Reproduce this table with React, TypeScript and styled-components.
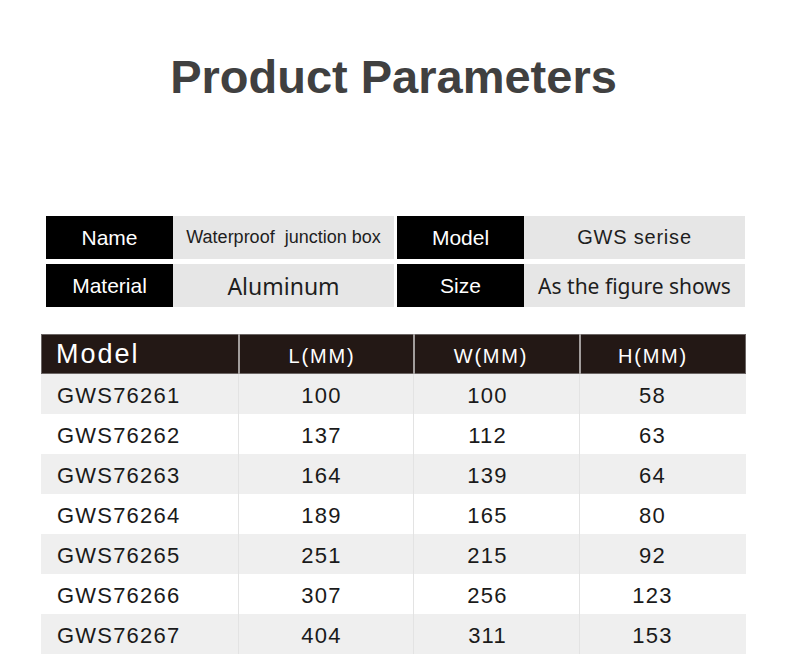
import React from 'react';
import styled, {createGlobalStyle} from "styled-components";

interface IInfoPair {
    label: string,
    value: string,
    valueFont: 'arial' | 'narrow' | 'round',
    valueSize: number
}

interface ISizeRow {
    model: string,
    l: number,
    w: number,
    h: number
}

const infoRows: IInfoPair[][] = [[
    {label: 'Name', value: 'Waterproof  junction box', valueFont: 'narrow', valueSize: 18},
    {label: 'Model', value: 'GWS serise', valueFont: 'arial', valueSize: 20},
], [
    {label: 'Material', value: 'Aluminum', valueFont: 'round', valueSize: 23},
    {label: 'Size', value: 'As the figure shows', valueFont: 'round', valueSize: 21},
]];

const sizeRows: ISizeRow[] = [
    {model: 'GWS76261', l: 100, w: 100, h: 58},
    {model: 'GWS76262', l: 137, w: 112, h: 63},
    {model: 'GWS76263', l: 164, w: 139, h: 64},
    {model: 'GWS76264', l: 189, w: 165, h: 80},
    {model: 'GWS76265', l: 251, w: 215, h: 92},
    {model: 'GWS76266', l: 307, w: 256, h: 123},
    {model: 'GWS76267', l: 404, w: 311, h: 153},
];

// numbers sit a bit left of the column centre in the original
const columnShift = [0, 9, 18, 21];

const fontStacks = {
    arial: `"Liberation Sans", Arial, sans-serif`,
    narrow: `"Liberation Sans Narrow", "Liberation Sans", Arial, sans-serif`,
    round: `"Noto Sans", "Open Sans", sans-serif`,
};

function App() {
    return (
        <Page>
            <GlobalStyle/>
            <Title>Product Parameters</Title>

            <InfoTable>
                {infoRows.map((row, rowIndex) => (
                    <InfoRow key={'info' + rowIndex}>
                        {row.map(({label, value, valueFont, valueSize}) => (
                            <InfoPair key={label}>
                                <InfoLabel>{label}</InfoLabel>
                                <InfoValue $font={valueFont} $size={valueSize}>{value}</InfoValue>
                            </InfoPair>
                        ))}
                    </InfoRow>
                ))}
            </InfoTable>

            <SizeTable>
                <HeaderRow>
                    <HeaderCell $first>Model</HeaderCell>
                    <HeaderCell $shift={columnShift[1]}>L(MM)</HeaderCell>
                    <HeaderCell $shift={columnShift[2] - 6}>W(MM)</HeaderCell>
                    <HeaderCell $shift={columnShift[3]}>H(MM)</HeaderCell>
                </HeaderRow>
                {sizeRows.map((row, index) => (
                    <BodyRow key={row.model} $shaded={index % 2 === 0}>
                        <BodyCell $first>{row.model}</BodyCell>
                        <BodyCell $shift={columnShift[1]}>{row.l}</BodyCell>
                        <BodyCell $shift={columnShift[2]}>{row.w}</BodyCell>
                        <BodyCell $shift={columnShift[3]}>{row.h}</BodyCell>
                    </BodyRow>
                ))}
            </SizeTable>
        </Page>
    );
}

const GlobalStyle = createGlobalStyle`
  body {
    margin: 0;
    background: #ffffff;
    font-family: "Liberation Sans", Arial, sans-serif;
  }
`;

const Page = styled.div`
  width: 790px;
  height: 667px;
  overflow: hidden;
  display: flex;
  flex-direction: column;
  background: #ffffff;
`;

const Title = styled.h1`
  margin: 53px 0 0;
  font-size: 47px;
  line-height: 47px;
  font-weight: bold;
  text-align: center;
  color: #404040;
  padding-right: 3px;
`;

const InfoTable = styled.div`
  margin: 116px 0 0 46px;
  display: flex;
  flex-direction: column;
  gap: 5px;
`;

const InfoRow = styled.div`
  display: flex;
  gap: 3px;
  height: 43px;
`;

const InfoPair = styled.div`
  display: flex;
`;

const InfoLabel = styled.div`
  width: 127px;
  background: #000000;
  color: #ffffff;
  font-size: 21px;
  display: flex;
  align-items: center;
  justify-content: center;
`;

const InfoValue = styled.div<{ $font: keyof typeof fontStacks, $size: number }>`
  width: 221px;
  background: #e6e6e6;
  color: #1e1e1e;
  font-family: ${p => fontStacks[p.$font]};
  font-size: ${p => p.$size}px;
  letter-spacing: ${p => p.$font === 'arial' ? '0.8px' : '0'};
  white-space: pre;
  display: flex;
  align-items: center;
  justify-content: center;
`;

const SizeTable = styled.div`
  margin: 27px 0 0 41px;
  width: 705px;
  display: flex;
  flex-direction: column;
`;

const columns = `197px 175px 166px 167px`;

const HeaderRow = styled.div`
  display: grid;
  grid-template-columns: ${columns};
  height: 40px;
  background: #231815;
  box-shadow: inset 0 0 0 1px #6b6564;
`;

const HeaderCell = styled.div<{ $first?: boolean, $shift?: number }>`
  display: flex;
  align-items: center;
  justify-content: ${p => p.$first ? 'flex-start' : 'center'};
  padding: ${p => p.$first ? '1px 0 0 15px' : `4px ${p.$shift ?? 0}px 0 0`};
  border-left: ${p => p.$first ? 'none' : '2px solid #a29d9c'};
  color: #ffffff;
  font-size: ${p => p.$first ? '27px' : '20px'};
  letter-spacing: ${p => p.$first ? '2px' : '1.8px'};
`;

const BodyRow = styled.div<{ $shaded: boolean }>`
  display: grid;
  grid-template-columns: ${columns};
  height: 40px;
  background: ${p => p.$shaded ? '#efefef' : '#ffffff'};
`;

const BodyCell = styled.div<{ $first?: boolean, $shift?: number }>`
  display: flex;
  align-items: center;
  justify-content: ${p => p.$first ? 'flex-start' : 'center'};
  padding: ${p => p.$first ? '3px 0 0 16px' : `3px ${p.$shift ?? 0}px 0 0`};
  border-left: ${p => p.$first ? 'none' : '1px solid #e3e3e3'};
  color: #1a1a1a;
  font-size: 22px;
  letter-spacing: 1.2px;
`;

export default App;
